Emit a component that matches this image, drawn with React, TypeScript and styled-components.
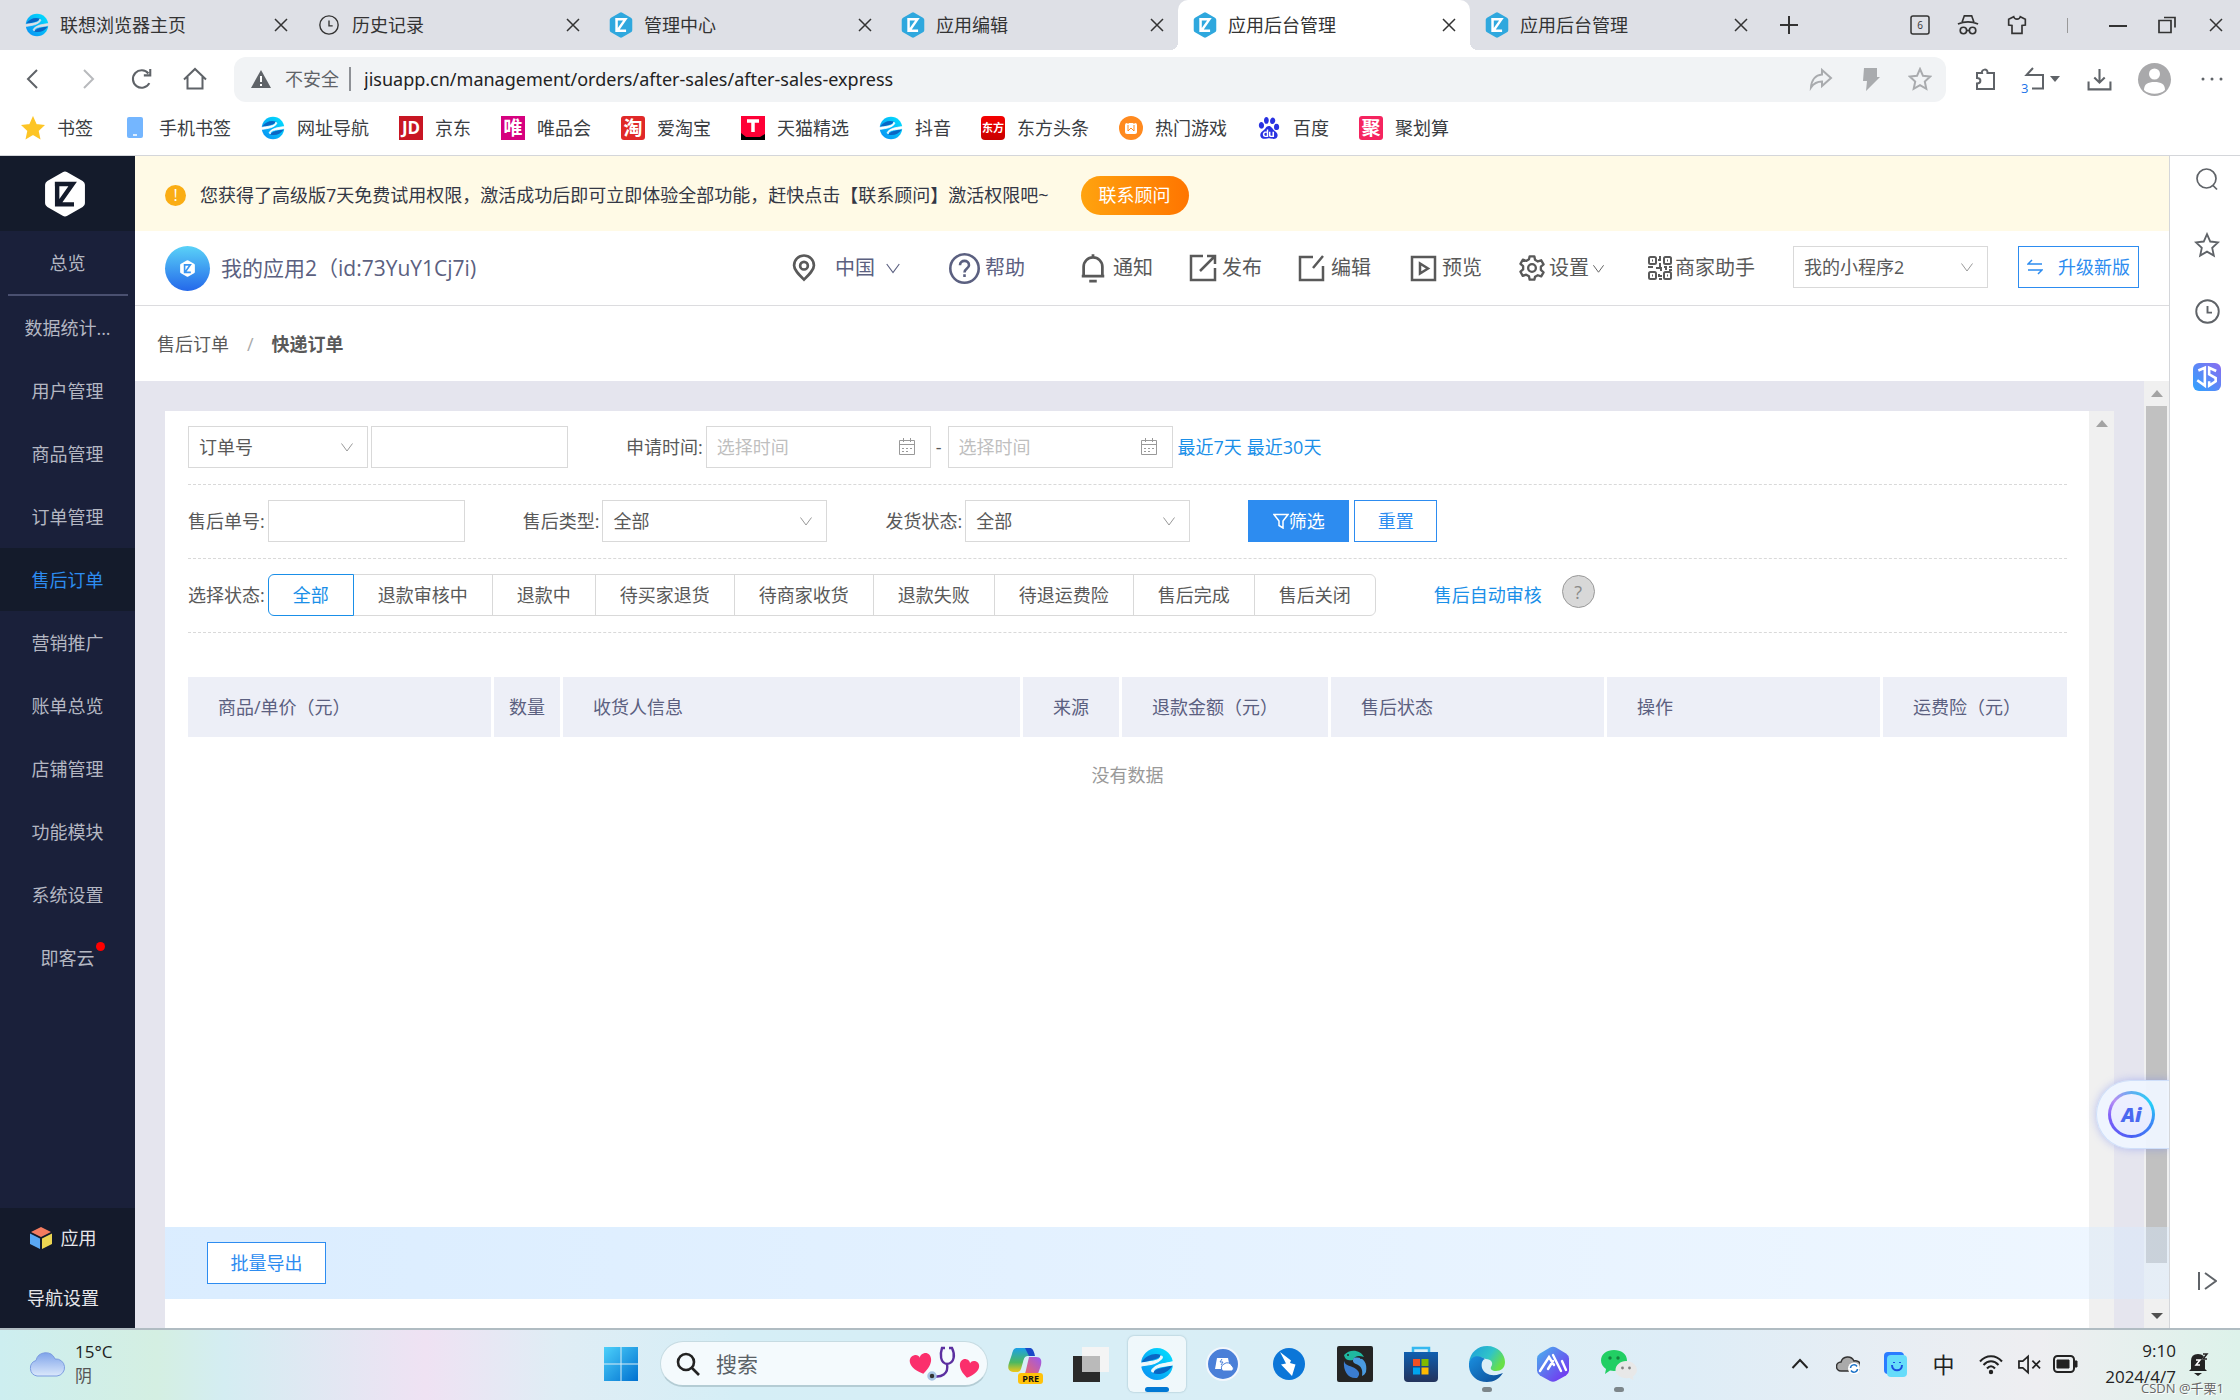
import React from "react";
import styled, { createGlobalStyle, css } from "styled-components";
import { SiBaidu } from "react-icons/si";

const ink = "#595959";
const slate = "#5b6080";
const blue = "#2d8cf0";
const line = "#d9d9d9";

const GlobalStyle = createGlobalStyle`
  * { box-sizing: border-box; }
  body {
    margin: 0;
    font-family: "Open Sans", "Noto Sans CJK SC", sans-serif;
    font-size: 18px;
    line-height: 24px;
    color: ${ink};
    background: #fff;
  }
  a { color: inherit; text-decoration: none; }
  button, input, select { font: inherit; color: inherit; margin: 0; border-radius: 0; }
  button { padding: 0; border: 0; background: none; cursor: pointer; }
  svg { display: block; flex: none; }
`;

const Screen = styled.div`
  display: flex;
  flex-direction: column;
  min-height: 100vh;
`;

/* ---------- icon helpers ---------- */

type IconProps = { size?: number; box?: number; stroke?: string; fill?: string; width?: number; d?: string; children?: React.ReactNode };
const Icon = ({ size = 24, box = 24, stroke = "currentColor", fill = "none", width = 2, d, children }: IconProps) => (
  <svg width={size} height={size} viewBox={`0 0 ${box} ${box}`} fill={fill} stroke={stroke} strokeWidth={width} aria-hidden="true">
    {d && <path d={d} />}
    {children}
  </svg>
);

const LenovoMark = ({ size = 24, id }: { size?: number; id: string }) => (
  <svg width={size} height={size} viewBox="0 0 32 32" aria-hidden="true">
    <defs>
      <linearGradient id={id} x1="0" y1="1" x2="1" y2="0">
        <stop offset="0" stopColor="#0a8cf2" />
        <stop offset="1" stopColor="#02e4ff" />
      </linearGradient>
      <mask id={`${id}Cut`}>
        <rect width="32" height="32" fill="#fff" />
        <path d="M-1 18.500C7 16.500 15 17 20.500 11c1-1.500.5-2.500-1-2.600C19 14 9 13.500-1 15.500z" fill="#000" stroke="#000" strokeWidth="1" />
        <path d="M33 13.500C25 15.500 17 15 11.500 21c-1 1.500-.5 2.500 1 2.600C13 18 23 18.500 33 16.500z" fill="#000" stroke="#000" strokeWidth="1" />
      </mask>
    </defs>
    <g mask={`url(#${id}Cut)`}>
      <circle cx="16" cy="16" r="15" fill={`url(#${id})`} />
      <path d="M2 13.500C6 8 13 5 20 7.500c-2 4-10 5-18 7z" fill="#0a66c4" />
      <path d="M30 18.500c-4 5.500-11 8.500-18 6 2-4 10-5 18-7z" fill="#0a66c4" />
    </g>
  </svg>
);

const JisuMark = ({ size = 26, hex = "#2fa8de", mark = "#fff" }: { size?: number; hex?: string; mark?: string }) => (
  <svg width={size} height={size} viewBox="0 0 24 24" aria-hidden="true">
    <path d="M10.800.600q1.200-.7 2.400 0l8 4.600q1.200.7 1.200 2v9.600q0 1.300-1.200 2l-8 4.600q-1.200.7-2.400 0l-8-4.600q-1.200-.7-1.200-2V7.200q0-1.300 1.200-2z" fill={hex} />
    <path d="M7.900 6.600v10.800h8.800M6.700 6.800h9.300L8.800 17" fill="none" stroke={mark} strokeWidth="2.300" />
  </svg>
);

const ClockIcon = ({ size = 24, width = 1.5 }: { size?: number; width?: number }) => (
  <Icon size={size} width={width}>
    <circle cx="12" cy="12" r="10" />
    <path d="M12 7v6h4" />
  </Icon>
);

const StarIcon = ({ size = 24, fill = "none", stroke = "currentColor", width = 1.7 }: { size?: number; fill?: string; stroke?: string; width?: number }) => (
  <Icon size={size} fill={fill} stroke={stroke} width={width} d="M12 2l3 6.800 7.200.8-5.400 5 1.500 7.200-6.300-3.700-6.300 3.700 1.500-7.200-5.400-5 7.200-.8z" />
);

const ChevronDown = ({ size = 14 }: { size?: number }) => <Icon size={size} box={14} width={1} d="M1.500 3.500L7 11l5.500-7.500" />;

/* ---------- browser chrome ---------- */

const TabStrip = styled.div`
  display: flex;
  height: 50px;
  padding-left: 10px;
  background: #dee0e6;
  color: #333;
`;

const Tab = styled.div<{ $active?: boolean }>`
  position: relative;
  display: flex;
  flex: 0 1 292px;
  align-items: center;
  gap: 12px;
  padding: 0 13px 0 16px;
  ${(p) =>
    p.$active &&
    css`
      background: #fff;
      border-radius: 10px 10px 0 0;
      &::before, &::after {
        content: "";
        position: absolute;
        bottom: 0;
        width: 8px;
        height: 8px;
      }
      &::before { left: -8px; background: radial-gradient(circle at 0 0, transparent 8px, #fff 8px); }
      &::after { right: -8px; background: radial-gradient(circle at 100% 0, transparent 8px, #fff 8px); }
    `}
`;

const TabTitle = styled.a`
  flex: 1;
  white-space: nowrap;
`;

const TabIcon = styled.span`
  display: flex;
  justify-content: center;
  width: 22px;
`;

const CellButton = styled.button<{ $w: number }>`
  display: flex;
  flex: none;
  align-items: center;
  justify-content: center;
  width: ${(p) => p.$w}px;
`;

const StripEnd = styled.div`
  display: flex;
  margin-left: auto;
`;

const StripRule = styled.span`
  align-self: center;
  width: 1px;
  height: 15px;
  margin: 0 25px;
  background: #999;
`;

const AddressRow = styled.div`
  display: flex;
  align-items: center;
  height: 58px;
  padding-left: 5px;
  color: #5f6368;
`;

const AddressBar = styled.label`
  display: flex;
  flex: 1;
  align-items: center;
  height: 45px;
  margin: 0 14px 0 12px;
  padding-left: 17px;
  border-radius: 12px;
  background: #f1f3f5;
`;

const SecurityNote = styled.span`
  display: flex;
  align-items: center;
  gap: 14px;
  padding-right: 10px;
  border-right: 2px solid #8e9196;
`;

const UrlInput = styled.input`
  flex: 1;
  padding: 0 0 0 13px;
  border: 0;
  outline: 0;
  background: none;
  color: #222;
  font-family: "Noto Sans", sans-serif;
`;

const Avatar = styled.span`
  display: flex;
  align-items: center;
  justify-content: center;
  width: 33px;
  height: 33px;
  border-radius: 50%;
  overflow: hidden;
  background: #a9a9ab;
`;

const UndoIcon = styled.span`
  position: relative;
  display: flex;
  align-items: center;
  gap: 6px;
  small {
    position: absolute;
    left: -3px;
    bottom: -4px;
    font-size: 13px;
    line-height: 14px;
    color: #1a73e8;
    background: #fff;
  }
`;

const Bookmarks = styled.nav`
  display: flex;
  align-items: center;
  gap: 30px;
  height: 48px;
  padding: 0 21px 8px;
  border-bottom: 1px solid #d4d6da;
  color: #3a3d42;
`;

const Bookmark = styled.a`
  display: flex;
  align-items: center;
  gap: 12px;
  white-space: nowrap;
`;

const Badge = styled.span<{ $bg: string; $size: number; $radius?: number }>`
  display: flex;
  align-items: center;
  justify-content: center;
  width: 24px;
  height: 24px;
  border-radius: ${(p) => p.$radius ?? 0}px;
  background: ${(p) => p.$bg};
  color: #fff;
  font-size: ${(p) => p.$size}px;
  font-weight: 700;
`;

/* ---------- page ---------- */

const Body = styled.div`
  display: flex;
  flex: 1;
`;

const SideNav = styled.nav`
  display: flex;
  flex-direction: column;
  flex: none;
  width: 135px;
  background: #1a203a;
  color: #b4b7c2;
`;

const SideLogo = styled.a`
  display: flex;
  align-items: center;
  justify-content: center;
  height: 75px;
  padding-right: 5px;
  background: #141b2b;
`;

const SideLink = styled.a<{ $active?: boolean }>`
  display: flex;
  align-items: center;
  justify-content: center;
  height: 63px;
  background: ${(p) => (p.$active ? "#141b2b" : "transparent")};
  color: ${(p) => (p.$active ? blue : "inherit")};
`;

const SideRule = styled.hr`
  width: 120px;
  height: 2px;
  margin: 0 auto;
  border: 0;
  background: #4a5070;
`;

const DotLabel = styled.span`
  position: relative;
  &::after {
    content: "";
    position: absolute;
    top: -4px;
    right: -10px;
    width: 9px;
    height: 9px;
    border-radius: 50%;
    background: #f00;
  }
`;

const SideBottom = styled.div`
  margin-top: auto;
  padding-right: 9px;
  background: #141a2b;
  color: #e6e6ea;
`;

const SideBottomLink = styled.a`
  display: flex;
  align-items: center;
  justify-content: center;
  gap: 9px;
  height: 60px;
`;

const Main = styled.main`
  display: flex;
  flex: 1;
  flex-direction: column;
  min-width: 0;
`;

const Notice = styled.div`
  display: flex;
  align-items: center;
  height: 75px;
  padding: 3px 0 0 30px;
  background: #fffae6;
  color: #333745;
`;

const NoticeMark = styled.span`
  width: 21px;
  height: 21px;
  margin-right: 14px;
  border-radius: 50%;
  background: #faad14;
  color: #fff;
  font-size: 16px;
  line-height: 21px;
  text-align: center;
`;

const AdvisorButton = styled.button`
  width: 108px;
  height: 39px;
  margin-left: 32px;
  border-radius: 20px;
  background: linear-gradient(90deg, #ffa30f, #ff7500);
  color: #fff;
`;

const Header = styled.header`
  display: flex;
  align-items: center;
  height: 75px;
  padding: 0 30px;
  border-bottom: 1px solid #dcdcdf;
  font-size: 20px;
`;

const AppBadge = styled.span`
  display: flex;
  flex-direction: column;
  align-items: center;
  justify-content: center;
  width: 45px;
  height: 45px;
  margin-right: 11px;
  border-radius: 50%;
  background: linear-gradient(#5ad2f8, #2468ea);
`;

const AppName = styled.h1`
  margin: 0 auto 0 0;
  color: ${slate};
  font-size: 21px;
  font-weight: 400;
`;

const HeaderLink = styled.a<{ $gap: number; $space?: number; $slate?: boolean }>`
  display: flex;
  align-items: center;
  gap: ${(p) => p.$space ?? 5}px;
  margin-left: ${(p) => p.$gap}px;
  color: ${(p) => (p.$slate ? slate : ink)};
  white-space: nowrap;
`;

const RegionName = styled.span`
  margin: 0 6px 0 13px;
`;

const SelectBox = styled.span<{ $w: number; $gap?: number }>`
  position: relative;
  display: inline-flex;
  width: ${(p) => p.$w}px;
  margin-left: ${(p) => p.$gap ?? 0}px;
  font-size: 18px;
  svg {
    position: absolute;
    top: 14px;
    right: 14px;
    color: #999;
    pointer-events: none;
  }
`;

const SelectInput = styled.select`
  appearance: none;
  width: 100%;
  height: 42px;
  padding: 0 10px;
  border: 1px solid ${line};
  background: #fff;
`;

const OutlineButton = styled.button<{ $w: number; $gap?: number }>`
  display: flex;
  align-items: center;
  justify-content: center;
  gap: 15px;
  width: ${(p) => p.$w}px;
  height: 42px;
  margin-left: ${(p) => p.$gap ?? 0}px;
  border: 1px solid ${blue};
  background: #fff;
  color: ${blue};
  font-size: 18px;
`;

const SolidButton = styled(OutlineButton)`
  gap: 0;
  background: ${blue};
  color: #fff;
`;

const HeaderActions = styled.div`
  display: flex;
  padding-bottom: 3px;
`;

const Crumbs = styled.nav`
  display: flex;
  align-items: center;
  gap: 18px;
  height: 75px;
  padding-left: 22px;
  span { color: #aaa; }
`;

const Workspace = styled.div`
  position: relative;
  display: flex;
  flex: 1;
  background: #e5e5ee;
`;

const Card = styled.section`
  display: flex;
  flex: 1;
  min-width: 0;
  margin: 30px 30px 0;
  background: #fff;
`;

const CardBody = styled.div`
  flex: 1;
  min-width: 0;
  padding: 0 22px 0 23px;
`;

const ScrollTrack = styled.div`
  display: flex;
  flex: none;
  flex-direction: column;
  align-items: center;
  width: 25px;
  background: #f0f0f0;
  color: #a3a3a3;
`;

const ScrollArrow = styled.span<{ $down?: boolean }>`
  height: 25px;
  padding-top: 9px;
  color: ${(p) => (p.$down ? "#505050" : "inherit")};
`;

const ScrollThumb = styled.span`
  flex: 857;
  width: 21px;
  background: #c1c1c1;
`;

const ScrollRest = styled.span`
  flex: 40;
`;

const FilterRow = styled.div`
  display: flex;
  align-items: center;
  height: 74px;
  padding-bottom: 2px;
  border-bottom: 1px dashed ${line};
  white-space: nowrap;
`;

const Field = styled.div<{ $gap?: number }>`
  display: flex;
  align-items: center;
  gap: 3px;
  margin-left: ${(p) => p.$gap ?? 0}px;
`;

const TextInput = styled.input`
  width: 197px;
  height: 42px;
  padding: 0 10px;
  border: 1px solid ${line};
  outline: 0;
`;

const DateBox = styled.span`
  display: flex;
  align-items: center;
  width: 225px;
  height: 42px;
  padding: 0 14px 0 10px;
  border: 1px solid ${line};
  color: #999;
`;

const DateInput = styled.input`
  flex: 1;
  min-width: 0;
  padding: 0;
  border: 0;
  outline: 0;
  background: none;
  &::placeholder { color: #bfbfbf; opacity: 1; }
`;

const Dash = styled.span`
  margin: 0 3px 0 2px;
`;

const QuickLink = styled.a<{ $gap?: number }>`
  margin-left: ${(p) => p.$gap ?? 2}px;
  color: #1a8fe8;
`;

const Segments = styled.div`
  display: flex;
`;

const Segment = styled.button<{ $active?: boolean }>`
  height: 42px;
  padding: 0 24px;
  margin-left: -1px;
  border: 1px solid ${line};
  background: #fff;
  &:first-child { margin-left: 0; border-radius: 6px 0 0 6px; }
  &:last-child { border-radius: 0 6px 6px 0; }
  ${(p) =>
    p.$active &&
    css`
      z-index: 1;
      border-color: #1a8fe8;
      color: #1a8fe8;
    `}
`;

const HelpButton = styled.button`
  width: 33px;
  height: 33px;
  margin: 0 0 6px 20px;
  border: 1px solid #999;
  border-radius: 50%;
  background: #d8d8d8;
  color: #8a8a8a;
`;

const Table = styled.table`
  width: 100%;
  margin-top: 44px;
  border-collapse: separate;
  border-spacing: 0;
  table-layout: fixed;
`;

const HeadCell = styled.th<{ $w?: number; $center?: boolean }>`
  width: ${(p) => (p.$w ? `${p.$w}px` : "auto")};
  height: 60px;
  padding: ${(p) => (p.$center ? "0" : "0 0 0 30px")};
  border-right: 3px solid #fff;
  background: #edeff7;
  color: ${slate};
  font-weight: 400;
  text-align: ${(p) => (p.$center ? "center" : "left")};
  white-space: nowrap;
  &:last-child { border-right: 0; }
`;

const EmptyCell = styled.td`
  height: 76px;
  padding: 0;
  color: #999;
  text-align: center;
`;

const ExportBar = styled.div`
  position: absolute;
  right: 0;
  bottom: 29px;
  left: 30px;
  display: flex;
  align-items: center;
  height: 72px;
  padding-left: 42px;
  background: linear-gradient(90deg, rgba(217, 236, 255, 0.96), rgba(214, 234, 255, 0.4));
`;

const AiButton = styled.button`
  position: absolute;
  right: 0;
  bottom: 179px;
  width: 73px;
  height: 69px;
  padding-left: 11px;
  border: 1px solid #cfdffa;
  border-right: 0;
  border-radius: 35px 0 0 35px;
  background: rgba(238, 245, 254, 0.97);
  box-shadow: 0 0 8px rgba(100, 120, 240, 0.4);
  clip-path: inset(-12px 0 -12px -12px);
`;

const AiRing = styled.span`
  display: flex;
  align-items: center;
  justify-content: center;
  width: 47px;
  height: 47px;
  border: 3px solid transparent;
  border-radius: 50%;
  background: linear-gradient(#eef0ff, #e6ebff) padding-box,
    conic-gradient(#62aef0, #22d0f8 60deg, #3b8cf6 110deg, #4a5ef4 180deg, #7a5cf8 260deg, #b890f4 310deg, #62aef0) border-box;
  color: #4a68f0;
  font-size: 20px;
  font-style: italic;
  font-weight: 800;
`;

const RightRail = styled.aside`
  display: flex;
  flex: none;
  flex-direction: column;
  align-items: center;
  width: 71px;
  padding: 10px 0 34px 4px;
  border-left: 1px solid #d4d6da;
  color: #5f6368;
`;

const RailButton = styled.button<{ $bottom?: boolean }>`
  display: flex;
  align-items: center;
  justify-content: center;
  width: 40px;
  height: 26px;
  margin: ${(p) => (p.$bottom ? "auto 0 0" : "0 0 40px")};
`;

const JsBadge = styled.span`
  display: flex;
  align-items: center;
  justify-content: center;
  width: 28px;
  height: 28px;
  border-radius: 6px;
  background: linear-gradient(45deg, #2ea4ff, #8a6cf0);
`;

/* ---------- taskbar ---------- */

const TaskBar = styled.footer`
  position: relative;
  display: grid;
  grid-template-columns: 1fr auto 1fr;
  align-items: center;
  height: 72px;
  padding-bottom: 2px;
  border-top: 2px solid #b0bcc2;
  background: linear-gradient(90deg, #cdeef0, #d4efe2 7%, #d4edf2 10%, #efe2f3 19%, #dfedf5 25%, #d5eef6 33%, #dbeef6 66%, #deedf7 75%, #eeeef1 91%, #ddf2ea);
  color: #222;
`;

const Weather = styled.a`
  display: flex;
  align-items: center;
  gap: 10px;
  padding-left: 29px;
  font-size: 17px;
  small { display: block; font-size: 17px; color: #555; }
`;

const Dock = styled.div`
  display: flex;
  align-items: center;
`;

const DockButton = styled.button<{ $active?: boolean; $mark?: string }>`
  position: relative;
  display: flex;
  align-items: center;
  justify-content: center;
  width: 58px;
  height: 56px;
  margin: 0 4px;
  border-radius: 6px;
  background: ${(p) => (p.$active ? "rgba(255,255,255,.6)" : "transparent")};
  box-shadow: ${(p) => (p.$active ? "0 0 2px rgba(0,60,80,.35)" : "none")};
  ${(p) =>
    p.$mark &&
    css`
      &::after {
        content: "";
        position: absolute;
        bottom: 0;
        width: ${p.$active ? 24 : 10}px;
        height: 5px;
        border-radius: 3px;
        background: ${p.$mark};
      }
    `}
`;

const SearchBox = styled.label`
  display: flex;
  align-items: center;
  width: 328px;
  height: 46px;
  margin: 0 4px 0 6px;
  padding: 0 6px 0 15px;
  border: 1px solid #c6dbe2;
  border-bottom: 2px solid #b4ccd4;
  border-radius: 23px;
  background: #f4fafd;
`;

const SearchInput = styled.input`
  flex: 1;
  min-width: 0;
  padding: 0 0 0 16px;
  border: 0;
  outline: 0;
  background: none;
  font-size: 21px;
  &::placeholder { color: #5a6166; opacity: 1; }
`;

const Tray = styled.div`
  display: flex;
  align-items: center;
  justify-content: flex-end;
  padding-right: 18px;
`;

const TrayButton = styled.button<{ $w: number }>`
  display: flex;
  align-items: center;
  justify-content: center;
  width: ${(p) => p.$w}px;
  font-size: 22px;
`;

const Clock = styled.time`
  width: 90px;
  font-size: 17px;
  line-height: 26px;
  text-align: right;
  white-space: nowrap;
`;

const Watermark = styled.span`
  position: absolute;
  right: 16px;
  bottom: 4px;
  font-size: 13px;
  line-height: 16px;
  color: #666;
  text-shadow: 1px 1px 0 #fff;
`;

const CopilotTag = styled.span`
  position: absolute;
  right: 11px;
  bottom: 8px;
  padding: 0 4px;
  border-radius: 3px;
  background: #ffc20a;
  color: #111;
  font-size: 9px;
  font-weight: 700;
  line-height: 11px;
`;

/* ---------- data ---------- */

const tabs = [
  { title: "联想浏览器主页", icon: <LenovoMark id="tabLenovo" /> },
  { title: "历史记录", icon: <ClockIcon size={22} /> },
  { title: "管理中心", icon: <JisuMark /> },
  { title: "应用编辑", icon: <JisuMark /> },
  { title: "应用后台管理", icon: <JisuMark />, active: true },
  { title: "应用后台管理", icon: <JisuMark /> },
];

const PhoneIcon = () => (
  <svg width="24" height="24" viewBox="0 0 24 24">
    <rect x="4" y="1" width="16" height="21" rx="2" fill="#74b6ff" />
    <path d="M10 19h4" stroke="#fff" strokeWidth="1.500" />
  </svg>
);

const GameIcon = () => (
  <svg width="24" height="24" viewBox="0 0 24 24">
    <circle cx="12" cy="12" r="12" fill="#ff8a1f" />
    <rect x="6" y="7" width="12" height="11" rx="2" fill="#fff" />
    <path d="M9 9v6l3-3 3 3V9M9 5v3M15 5v3" fill="none" stroke="#ff8a1f" strokeWidth="1" />
  </svg>
);

const TmallIcon = () => (
  <svg width="24" height="24" viewBox="0 0 24 24">
    <path d="M0 0h24v24H0z" fill="#ff0036" />
    <path d="M0 17l5 4h14l5-3v6H0z" fill="#000" />
    <path d="M6 5h12M12 5v11" stroke="#fff" strokeWidth="3.500" />
  </svg>
);

const bookmarks = [
  { label: "书签", icon: <StarIcon size={24} fill="#fdc526" stroke="#fdc526" /> },
  { label: "手机书签", icon: <PhoneIcon /> },
  { label: "网址导航", icon: <LenovoMark id="bmNav" /> },
  { label: "京东", icon: <Badge $bg="#c81623" $size={17}>JD</Badge> },
  { label: "唯品会", icon: <Badge $bg="#d6007f" $size={19}>唯</Badge> },
  { label: "爱淘宝", icon: <Badge $bg="#e02828" $size={19} $radius={3}>淘</Badge> },
  { label: "天猫精选", icon: <TmallIcon /> },
  { label: "抖音", icon: <LenovoMark id="bmDou" /> },
  { label: "东方头条", icon: <Badge $bg="linear-gradient(#f50000,#c80000)" $size={11} $radius={4}>东方</Badge> },
  { label: "热门游戏", icon: <GameIcon /> },
  { label: "百度", icon: <SiBaidu size={22} color="#2932e1" style={{ width: 24 }} /> },
  { label: "聚划算", icon: <Badge $bg="#f5245f" $size={19} $radius={3}>聚</Badge> },
];

const sideItems = ["数据统计...", "用户管理", "商品管理", "订单管理", "售后订单", "营销推广", "账单总览", "店铺管理", "功能模块", "系统设置"];

const statuses = ["全部", "退款审核中", "退款中", "待买家退货", "待商家收货", "退款失败", "待退运费险", "售后完成", "售后关闭"];

const columns: { title: string; w?: number; center?: boolean }[] = [
  { title: "商品/单价（元）", w: 306 },
  { title: "数量", w: 69, center: true },
  { title: "收货人信息" },
  { title: "来源", w: 99, center: true },
  { title: "退款金额（元）", w: 209 },
  { title: "售后状态", w: 276 },
  { title: "操作", w: 276 },
  { title: "运费险（元）", w: 184 },
];

/* ---------- pieces ---------- */

const CloseIcon = ({ size = 14, width = 1.5 }: { size?: number; width?: number }) => <Icon size={size} box={14} width={width} d="M1 1l12 12M13 1L1 13" />;

const CalendarIcon = () => (
  <Icon size={18} box={18} width={1}>
    <path d="M1.500 2.500h15v14h-15zM1.500 6.500h15M5.500 0v4M12.500 0v4" />
    <path d="M4 10.500h10M4 13.500h7" strokeDasharray="2 2" />
  </Icon>
);

const Triangle = ({ down }: { down?: boolean }) => (
  <svg width="12" height="8" viewBox="0 0 12 8" fill="currentColor">
    <path d={down ? "M0 1h12L6 7z" : "M0 7h12L6 0z"} />
  </svg>
);

const Dropdown = ({ id, value, w, gap, label }: { id: string; value: string; w: number; gap?: number; label?: string }) => (
  <SelectBox $w={w} $gap={gap}>
    <SelectInput id={id} aria-label={label} defaultValue={value}>
      <option>{value}</option>
    </SelectInput>
    <ChevronDown />
  </SelectBox>
);

const QrIcon = () => (
  <Icon size={26} box={26} width={2}>
    <rect x="2" y="2" width="7" height="7" rx="1.500" />
    <rect x="17" y="2" width="7" height="7" rx="1.500" />
    <rect x="2" y="17" width="7" height="7" rx="1.500" />
    <rect x="17" y="17" width="7" height="7" rx="1.500" />
    <path d="M5 5.500h1M20 5.500h1M5 20.500h1M20 20.500h1M13 1v4h-2M13 8v4M1 12h5M9 13h5v3M17 12h2v3M22 12h3M22 15h3M12 19v2h3M12 24h3" />
  </Icon>
);

const GearIcon = () => (
  <Icon size={28} width={2}>
    <circle cx="12" cy="12" r="3.300" />
    <path d="M10 2h4l.6 3 2.400 1.400 2.900-1 2 3.500-2.300 2v2.800l2.300 2-2 3.500-2.900-1-2.400 1.400L14 22h-4l-.6-2.900L7 17.700l-2.900 1-2-3.500 2.300-2v-2.800l-2.300-2 2-3.500 2.900 1 2.400-1.400z" strokeLinejoin="round" />
  </Icon>
);

const BrowserTop = () => (
  <header>
    <TabStrip>
      {tabs.map((t, i) => (
        <Tab key={i} $active={t.active}>
          <TabIcon>{t.icon}</TabIcon>
          <TabTitle href="#tab">{t.title}</TabTitle>
          <CellButton $w={16} aria-label="关闭标签页"><CloseIcon /></CellButton>
        </Tab>
      ))}
      <CellButton $w={54} aria-label="新建标签页"><Icon size={18} box={18} width={2} d="M9 0v18M0 9h18" /></CellButton>
      <StripEnd>
        <CellButton $w={48} aria-label="标签数量">
          <svg width="20" height="20" viewBox="0 0 20 20" fill="none" stroke="currentColor" strokeWidth="1.500">
            <rect x="1" y="1" width="18" height="18" rx="2" />
            <text x="10" y="14" textAnchor="middle" fontSize="10" fill="currentColor" stroke="none">6</text>
          </svg>
        </CellButton>
        <CellButton $w={48} aria-label="无痕浏览">
          <Icon size={22} width={1.8}>
            <path d="M1 11c7-3 15-3 22 0M5.500 9L8 2h8l2.500 7" />
            <circle cx="7" cy="18" r="3.500" /><circle cx="17" cy="18" r="3.500" /><path d="M10.500 18h3" />
          </Icon>
        </CellButton>
        <CellButton $w={50} aria-label="皮肤"><Icon size={20} width={2} d="M8 2c1 4 7 4 8 0l6 3v7l-4 .5V22H6v-9.500L2 12V5z" /></CellButton>
        <StripRule />
        <CellButton $w={49} aria-label="最小化"><Icon size={18} box={18} width={2} d="M0 10h18" /></CellButton>
        <CellButton $w={49} aria-label="还原"><Icon size={18} box={18} width={1.7} d="M1 4.500h12v12H1zM6 1.500h11v10" /></CellButton>
        <CellButton $w={49} aria-label="关闭"><CloseIcon /></CellButton>
      </StripEnd>
    </TabStrip>
    <AddressRow>
      <CellButton $w={55} aria-label="后退"><Icon size={20} box={20} width={2} d="M14 1L5 10l9 9" /></CellButton>
      <CellButton $w={56} aria-label="前进"><Icon size={20} box={20} width={2} stroke="#b8babd" d="M6 1l9 9-9 9" /></CellButton>
      <CellButton $w={52} aria-label="刷新"><Icon size={22} width={2.3} d="M20 16.500A9.500 9.500 0 1 1 19 6M21 1v7h-7" /></CellButton>
      <CellButton $w={54} aria-label="主页"><Icon size={24} width={2} d="M1 12.500L12 2l11 10.500M4.500 10v11.500h15V10" /></CellButton>
      <AddressBar>
        <SecurityNote>
          <svg width="20" height="18" viewBox="0 0 20 18"><path d="M10 0l10 18H0z" fill="#5f6368" /><path d="M10 6v6M10 14v2" stroke="#fff" strokeWidth="2" /></svg>
          不安全
        </SecurityNote>
        <UrlInput aria-label="地址栏" defaultValue="jisuapp.cn/management/orders/after-sales/after-sales-express" />
        <CellButton $w={48} aria-label="分享"><Icon size={24} stroke="#a9abae" width={2} d="M13 3l9 8-9 8v-4.500c-5 0-8 1.500-11 6C2.500 13 6.500 8 13 7.500z" /></CellButton>
        <CellButton $w={49} aria-label="极速模式"><Icon size={24} stroke="none" fill="#a9abae" d="M6 1h13v9h3L8 24l1-10H5z" /></CellButton>
        <CellButton $w={52} aria-label="收藏"><StarIcon size={24} stroke="#a9abae" width={2} /></CellButton>
      </AddressBar>
      <CellButton $w={50} aria-label="扩展"><Icon size={24} width={2} d="M4 6h5c-1-4 6-5 5.500 0H21v16H4v-5.500c4.500 0 4.500-5.500 0-5.500z" /></CellButton>
      <CellButton $w={64} aria-label="恢复标签页">
        <UndoIcon>
          <svg width="20" height="24" viewBox="0 0 20 24" fill="none" stroke="currentColor" strokeWidth="2"><path d="M9 1L2.500 8H19v13.500H8" /></svg>
          <small>3</small>
          <svg width="10" height="6" viewBox="0 0 10 6" fill="currentColor"><path d="M0 0h10L5 6z" /></svg>
        </UndoIcon>
      </CellButton>
      <CellButton $w={50} aria-label="下载"><Icon size={25} width={2} d="M12 2v13M7 10l5 5 5-5M1.500 14v7.500h21V14" /></CellButton>
      <CellButton $w={60} aria-label="账户">
        <Avatar><svg width="33" height="33" viewBox="0 0 33 33" fill="#fff"><circle cx="16.500" cy="11" r="5.500" /><path d="M6 27c0-6 4-8 10.500-8S27 21 27 27c-5 5-16 5-21 0z" /></svg></Avatar>
      </CellButton>
      <CellButton $w={56} aria-label="更多"><Icon size={24} stroke="none" fill="currentColor"><circle cx="3" cy="12" r="1.500" /><circle cx="12" cy="12" r="1.500" /><circle cx="21" cy="12" r="1.500" /></Icon></CellButton>
    </AddressRow>
    <Bookmarks>
      {bookmarks.map((b) => (
        <Bookmark key={b.label} href="#bookmark">{b.icon}{b.label}</Bookmark>
      ))}
    </Bookmarks>
  </header>
);

const Sidebar = () => (
  <SideNav>
    <SideLogo href="#home" aria-label="首页"><JisuMark size={46} hex="#fff" mark="#141b2b" /></SideLogo>
    <SideLink href="#overview">总览</SideLink>
    <SideRule />
    {sideItems.map((t) => (
      <SideLink key={t} href="#section" $active={t === "售后订单"}>{t}</SideLink>
    ))}
    <SideLink href="#cloud"><DotLabel>即客云</DotLabel></SideLink>
    <SideBottom>
      <SideBottomLink href="#apps">
        <svg width="22" height="22" viewBox="0 0 22 22">
          <path d="M11 0l10 5-10 5L1 5z" fill="#f47b5f" />
          <path d="M0 6.500l10 5V22L0 17z" fill="#5aa8f4" />
          <path d="M22 6.500l-10 5V22l10-5z" fill="#ecd552" />
        </svg>
        应用
      </SideBottomLink>
      <SideBottomLink href="#nav">导航设置</SideBottomLink>
    </SideBottom>
  </SideNav>
);

const PageHeader = () => (
  <Header>
    <AppBadge><JisuMark size={17} hex="#fff" mark="#3a96f2" /></AppBadge>
    <AppName>我的应用2（id:73YuY1Cj7i)</AppName>
    <HeaderLink href="#region" $gap={0} $slate $space={4}>
      <Icon size={28} stroke={ink} width={2.3}><path d="M12 22C7 17 3.500 13.500 3.500 9.800a8.500 8.500 0 0 1 17 0C20.500 13.500 17 17 12 22z" /><circle cx="12" cy="10" r="3.300" /></Icon>
      <RegionName>中国</RegionName>
      <ChevronDown size={16} />
    </HeaderLink>
    <HeaderLink href="#help" $gap={48} $slate>
      <Icon size={31} width={2}><circle cx="12" cy="12" r="11" /><path d="M8.500 9.500c0-4.500 7-4.500 7 0 0 2.500-3.500 2.500-3.500 5.500M12 16.500v2" /></Icon>帮助
    </HeaderLink>
    <HeaderLink href="#notice" $gap={53}>
      <Icon size={30} width={2.200}><path d="M3 18.500h18M4.500 18.500V11a7.500 7.500 0 0 1 15 0v7.500M12 3.500V1M9 22.500h6" /></Icon>通知
    </HeaderLink>
    <HeaderLink href="#publish" $gap={36}>
      <Icon size={28} box={28} width={2.500} d="M14 2H2v24h24V14M18 2h8v8M26 2L11 17" />发布
    </HeaderLink>
    <HeaderLink href="#edit" $gap={36}>
      <Icon size={28} box={28} width={2.500} d="M15 3H2v23h23V12M25 2L15 14" />编辑
    </HeaderLink>
    <HeaderLink href="#preview" $gap={39}>
      <Icon size={27} box={27} width={2.500} d="M2 2h23v23H2zM10 8.500v10l8-5z" />预览
    </HeaderLink>
    <HeaderLink href="#settings" $gap={36} $space={3}>
      <GearIcon />设置<ChevronDown size={13} />
    </HeaderLink>
    <HeaderLink href="#assistant" $gap={42} $space={2}>
      <QrIcon />商家助手
    </HeaderLink>
    <HeaderActions>
      <Dropdown id="miniapp" label="小程序" value="我的小程序2" w={195} gap={38} />
      <OutlineButton $w={121} $gap={30}>
        <Icon size={16} box={16} width={1.500} d="M15 5H1l4-4M1 11h14l-4 4" />升级新版
      </OutlineButton>
    </HeaderActions>
  </Header>
);

const Filters = () => (
  <form onSubmit={(e) => e.preventDefault()}>
    <FilterRow>
      <Field>
        <Dropdown id="keyType" label="查询类型" value="订单号" w={180} />
        <TextInput aria-label="查询内容" />
      </Field>
      <Field $gap={58}>
        <label htmlFor="from">申请时间:</label>
        <DateBox><DateInput id="from" placeholder="选择时间" /><CalendarIcon /></DateBox>
        <Dash>-</Dash>
        <DateBox><DateInput aria-label="结束时间" placeholder="选择时间" /><CalendarIcon /></DateBox>
        <QuickLink href="#7">最近7天</QuickLink>
        <QuickLink href="#30">最近30天</QuickLink>
      </Field>
    </FilterRow>
    <FilterRow>
      <Field>
        <label htmlFor="serviceNo">售后单号:</label>
        <TextInput id="serviceNo" />
      </Field>
      <Field $gap={58}>
        <label htmlFor="serviceType">售后类型:</label>
        <Dropdown id="serviceType" value="全部" w={225} />
      </Field>
      <Field $gap={58}>
        <label htmlFor="shipState">发货状态:</label>
        <Dropdown id="shipState" value="全部" w={225} />
      </Field>
      <Field $gap={58}>
        <SolidButton $w={101}><Icon size={16} box={16} width={1.500} d="M1 1.500h14L10 8v7l-4-2.500V8z" />筛选</SolidButton>
        <OutlineButton type="reset" $w={83} $gap={2}>重置</OutlineButton>
      </Field>
    </FilterRow>
    <FilterRow>
      <Field>
        <span>选择状态:</span>
        <Segments>
          {statuses.map((s, i) => (
            <Segment type="button" key={s} $active={i === 0}>{s}</Segment>
          ))}
        </Segments>
      </Field>
      <QuickLink href="#auto" $gap={58}>售后自动审核</QuickLink>
      <HelpButton type="button" aria-label="帮助">?</HelpButton>
    </FilterRow>
  </form>
);

const Orders = () => (
  <Table>
    <thead>
      <tr>
        {columns.map((c) => (
          <HeadCell key={c.title} $w={c.w} $center={c.center}>{c.title}</HeadCell>
        ))}
      </tr>
    </thead>
    <tbody>
      <tr><EmptyCell colSpan={columns.length}>没有数据</EmptyCell></tr>
    </tbody>
  </Table>
);

const Rail = () => (
  <RightRail>
    <RailButton aria-label="搜索"><Icon size={24} width={1.700}><circle cx="11.500" cy="11.500" r="9.500" /><path d="M18 18.500l4 4" /></Icon></RailButton>
    <RailButton aria-label="收藏"><StarIcon size={26} /></RailButton>
    <RailButton aria-label="历史"><ClockIcon size={27} width={1.700} /></RailButton>
    <RailButton aria-label="插件">
      <JsBadge>
        <svg width="26" height="26" viewBox="0 0 24 24" fill="none" stroke="#fff" strokeWidth="2.400">
          <path d="M4 6l6-2.500V20l-7-5M20.500 6.500L14 3.500v6l6 3.500v3l-6 4v-4" />
        </svg>
      </JsBadge>
    </RailButton>
    <RailButton $bottom aria-label="收起"><Icon size={20} box={20} width={2} d="M2 1v18M8 2l11 8-11 8" /></RailButton>
  </RightRail>
);

const Heart = ({ x, y, s, r }: { x: number; y: number; s: number; r: number }) => (
  <path transform={`translate(${x} ${y}) rotate(${r}) scale(${s})`} d="M0 11C-15 2-12-9-5-9-2-9 0-7 0-5 0-7 2-9 5-9 12-9 15 2 0 11z" fill="#fb2f6c" />
);

const Tasks = () => (
  <TaskBar>
    <Weather href="#weather">
      <svg width="36" height="26" viewBox="0 0 36 26">
        <defs><linearGradient id="cloud" x1="0" y1="0" x2="0" y2="1"><stop offset="0" stopColor="#7fa4ea" /><stop offset="1" stopColor="#dbe8fb" /></linearGradient></defs>
        <path d="M8 25a8 8 0 0 1-1-15.500A10 10 0 0 1 26 8a8.500 8.500 0 0 1 2 17z" fill="url(#cloud)" stroke="#7c9ce0" strokeWidth="1" />
      </svg>
      <span>15°C<small>阴</small></span>
    </Weather>
    <Dock>
      <DockButton aria-label="开始">
        <svg width="36" height="36" viewBox="0 0 36 36">
          <defs><linearGradient id="win" x1="0" y1="0" x2="1" y2="1"><stop offset="0" stopColor="#4cd0fa" /><stop offset="1" stopColor="#0070d0" /></linearGradient></defs>
          <path d="M1 1h16.500v16.500H1zM18.500 1H35v16.500H18.500zM1 18.500h16.500V35H1zM18.500 18.500H35V35H18.500z" fill="url(#win)" />
        </svg>
      </DockButton>
      <SearchBox>
        <Icon size={24} width={2.600}><circle cx="10" cy="10" r="8" /><path d="M16 16l7 7" /></Icon>
        <SearchInput type="text" aria-label="搜索" placeholder="搜索" />
        <svg width="72" height="36" viewBox="0 0 72 36" fill="none">
          <Heart x={12} y={17} s={1} r={-12} />
          <Heart x={60} y={22} s={0.9} r={12} />
          <path d="M36 2h-3c-2 6-2 15 5 16 8-1 8-10 5-16h-3M38 18c2 10-6 14-14 12" stroke="#5b2fa0" strokeWidth="2.400" />
          <circle cx="23" cy="30" r="3.500" fill="#333" stroke="#a8c4e4" strokeWidth="2.500" />
        </svg>
      </SearchBox>
      <DockButton aria-label="Copilot">
        <svg width="36" height="36" viewBox="0 0 36 36">
          <defs>
            <linearGradient id="cpA" x1="0" y1="0" x2="0" y2="1"><stop offset="0" stopColor="#1ba0e8" /><stop offset=".6" stopColor="#4cb860" /><stop offset="1" stopColor="#f0c818" /></linearGradient>
            <linearGradient id="cpB" x1="1" y1="0" x2="0" y2="1"><stop offset="0" stopColor="#9a58f0" /><stop offset="1" stopColor="#fa6a50" /></linearGradient>
          </defs>
          <path d="M10 2h12c3 0 4 3 5 8h-6c-3 0-4 2-5 6l-2 7c-1 3-3 3-6 3-6 0-8-3-6-9l3-9c1-4 2-6 5-6z" fill="url(#cpA)" />
          <path d="M18 2h5c3 0 4 4 5 8h-6z" fill="#1a48c8" />
          <path d="M22 11h7c5 0 6 3 5 8l-2 6c-1 3-2 5-5 5H14c3 0 4-2 5-6z" fill="url(#cpB)" />
        </svg>
        <CopilotTag>PRE</CopilotTag>
      </DockButton>
      <DockButton aria-label="任务视图">
        <svg width="36" height="36" viewBox="0 0 36 36">
          <path d="M0 10h27v26H0z" fill="#2a2a2a" />
          <path d="M9 1h27v25H9z" fill="#f4f4f4" />
          <path d="M9 10h18v16H9z" fill="#bababa" />
        </svg>
      </DockButton>
      <DockButton $active $mark="#0078d4" aria-label="联想浏览器"><LenovoMark size={34} id="dockLenovo" /></DockButton>
      <DockButton aria-label="网盘">
        <svg width="36" height="36" viewBox="0 0 36 36">
          <circle cx="18" cy="18" r="16" fill="#4a7fd8" stroke="#f2f7fd" strokeWidth="2" />
          <path d="M12 12h11l1 5-4 6H10z" fill="#fff" /><path d="M18 25a4 4 0 0 1 1-7 5 5 0 0 1 8 2 3 3 0 0 1 0 5z" fill="#fff" stroke="#4a7fd8" strokeWidth="1" />
          <path d="M17 13l-2 3h3l-2 3" stroke="#4a7fd8" fill="none" />
        </svg>
      </DockButton>
      <DockButton aria-label="迅雷">
        <svg width="34" height="34" viewBox="0 0 34 34"><circle cx="17" cy="17" r="16" fill="#0b76d8" /><path d="M8 5l11 8.500-1 2.500 5.500 1.500L20 29 9 17.500l5-1z" fill="#fff" /></svg>
      </DockButton>
      <DockButton aria-label="素材库">
        <svg width="36" height="36" viewBox="0 0 36 36">
          <rect width="36" height="36" rx="2" fill="#242424" />
          <path d="M7 9c6-7 17-5 20 2-6-2-9-1-11 3-4 1-8 0-9-5z" fill="#1fb8a0" />
          <path d="M17 12c8-2 14 4 12 14-1 2-2 3-4 4 1-7-1-10-6-12-3-1-4-4-2-6z" fill="#4a9ae0" />
          <path d="M7 15c2 6 7 4 12 8 4 3 4 6 1 9C11 33 6 25 7 15z" fill="#3a7cd0" />
          <circle cx="11" cy="9" r="1" fill="#242424" /><circle cx="24" cy="12" r="1" fill="#242424" />
        </svg>
      </DockButton>
      <DockButton aria-label="应用商店">
        <svg width="36" height="36" viewBox="0 0 36 36">
          <defs><linearGradient id="store" x1="0" y1="0" x2="0" y2="1"><stop offset="0" stopColor="#0f5fb0" /><stop offset="1" stopColor="#23335c" /></linearGradient></defs>
          <path d="M10 8V2h16v6" fill="none" stroke="#35b8f0" strokeWidth="2.500" />
          <path d="M1 6h34v26q0 4-4 4H5q-4 0-4-4z" fill="url(#store)" />
          <path d="M10 13h7v7h-7z" fill="#f25022" /><path d="M18.500 13h7v7h-7z" fill="#7fba00" />
          <path d="M10 21.500h7v7h-7z" fill="#00a4ef" /><path d="M18.500 21.500h7v7h-7z" fill="#ffb900" />
        </svg>
      </DockButton>
      <DockButton $mark="#7d868a" aria-label="Edge">
        <svg width="36" height="36" viewBox="0 0 36 36">
          <defs>
            <linearGradient id="edA" x1="0" y1="0" x2="1" y2=".5"><stop offset="0" stopColor="#1c9cdc" /><stop offset=".6" stopColor="#30c4c8" /><stop offset="1" stopColor="#68e048" /></linearGradient>
            <linearGradient id="edB" x1="0" y1="0" x2="1" y2="1"><stop offset="0" stopColor="#1a90e0" /><stop offset="1" stopColor="#0c4a94" /></linearGradient>
          </defs>
          <path d="M0 17C1 6 9 0 18 0c11 0 18 8 18 16 0 6-4 9-9 9-4 0-6-2-5-4 3-4 0-8-5-8C9 9 3 11 0 17z" fill="url(#edA)" />
          <path d="M0 17c2-7 9-9 16-4-3 1-4 5-3 9 2 6 10 9 18 6l3-1c-4 6-9 9-16 9C7 36-1 28 0 17z" fill="url(#edB)" />
        </svg>
      </DockButton>
      <DockButton aria-label="AI 助手">
        <svg width="34" height="36" viewBox="0 0 34 36">
          <defs><linearGradient id="hexa" x1="0" y1="0" x2="1" y2="1"><stop offset="0" stopColor="#48b4ee" /><stop offset="1" stopColor="#7828f0" /></linearGradient></defs>
          <path d="M14 1.500q3-1.500 6 0l10 6q3 2 3 5v12q0 3-3 5l-10 5.500q-3 1.500-6 0L4 29.500q-3-2-3-5v-12q0-3 3-5z" fill="url(#hexa)" />
          <path d="M4 25l9-14 5 8M12 23l5-8M17 9l8 16M26 15l4 9" stroke="#fff" strokeWidth="2.400" fill="none" strokeLinecap="round" />
        </svg>
      </DockButton>
      <DockButton $mark="#7d868a" aria-label="微信">
        <svg width="36" height="34" viewBox="0 0 36 34">
          <path d="M13 3c7 0 13 4 13 10.500S20 24 13 24l-4-.5L4 27l1-5C2 20 0 17 0 13.500 0 7 6 3 13 3z" fill="#22cf64" />
          <circle cx="9" cy="11" r="1.700" fill="#14803c" /><circle cx="17" cy="11" r="1.700" fill="#14803c" />
          <path d="M25 14c6 0 11 4 11 9 0 3-2 5-4 6.500l.5 3.500-4-2c-8 1-14-3-14-8s5-9 10.500-9z" fill="#e8e8e8" />
          <circle cx="21.500" cy="21" r="1.400" fill="#808080" /><circle cx="28.500" cy="21" r="1.400" fill="#808080" />
        </svg>
      </DockButton>
    </Dock>
    <Tray>
      <TrayButton $w={48} aria-label="显示隐藏的图标"><Icon size={18} box={18} width={2} d="M1.500 13L9 5l7.500 8" /></TrayButton>
      <TrayButton $w={48} aria-label="云同步">
        <svg width="24" height="20" viewBox="0 0 24 20"><path d="M5 17a4.500 4.500 0 0 1 0-9 7 7 0 0 1 13-1 5 5 0 0 1 3 10z" fill="#aaa" stroke="#333" strokeWidth="1.500" /><circle cx="18" cy="14.500" r="6" fill="#fff" /><path d="M14.500 14a3.500 3.500 0 0 1 6.500-1.500M21.500 15a3.500 3.500 0 0 1-6.500 1.500" fill="none" stroke="#1a72c8" strokeWidth="1.500" /></svg>
      </TrayButton>
      <TrayButton $w={47} aria-label="电脑管家">
        <svg width="23" height="25" viewBox="0 0 23 25"><rect width="20" height="22" rx="4" fill="#2a7cff" /><rect x="3" y="3" width="20" height="22" rx="4" fill="#66dcfa" /><path d="M8 13c0 7 10 7 10 0M10 10v1M16 10v1" fill="none" stroke="#1a50e0" strokeWidth="2" /></svg>
      </TrayButton>
      <TrayButton $w={49} aria-label="输入法">中</TrayButton>
      <TrayButton $w={46} aria-label="网络">
        <Icon size={24} width={2}><path d="M1 9.500c6-7 16-7 22 0M4.500 13c4.500-5 10.500-5 15 0M8 16.500c2.500-3 5.500-3 8 0" /><circle cx="12" cy="20" r="1.200" fill="currentColor" /></Icon>
      </TrayButton>
      <TrayButton $w={30} aria-label="音量"><Icon size={23} width={1.800} d="M1 8.500h4l5.500-5v17l-5.500-5H1zM15 8l8 8M23 8l-8 8" /></TrayButton>
      <TrayButton $w={42} aria-label="电池">
        <svg width="25" height="18" viewBox="0 0 25 18"><rect x="1" y="1" width="20" height="16" rx="3.500" fill="none" stroke="#222" strokeWidth="2" /><path d="M4 5h12v8H4zM22 6h2v6h-2z" fill="#222" stroke="#222" /></svg>
      </TrayButton>
      <Clock>9:10<br />2024/4/7</Clock>
      <TrayButton $w={46} aria-label="通知">
        <svg width="22" height="24" viewBox="0 0 22 24"><path d="M3 17V9q0-7 7-7t7 7v8l2 2H1zM6 21h8l-4 3z" fill="#222" /><path d="M8 8h4l-4 5h4M15 2h4l-4 5h4" fill="none" stroke="#fff" strokeWidth="1.500" /><path d="M15 2h4l-4 5h4" fill="none" stroke="#222" strokeWidth="1.500" /></svg>
      </TrayButton>
    </Tray>
    <Watermark>CSDN @千栗1</Watermark>
  </TaskBar>
);

export default function App() {
  return (
    <Screen>
      <GlobalStyle />
      <BrowserTop />
      <Body>
        <Sidebar />
        <Main>
          <Notice>
            <NoticeMark>!</NoticeMark>
            您获得了高级版7天免费试用权限，激活成功后即可立即体验全部功能，赶快点击【联系顾问】激活权限吧~
            <AdvisorButton>联系顾问</AdvisorButton>
          </Notice>
          <PageHeader />
          <Crumbs><a href="#after">售后订单</a><span>/</span><strong>快递订单</strong></Crumbs>
          <Workspace>
            <Card>
              <CardBody>
                <Filters />
                <Orders />
              </CardBody>
              <ScrollTrack><ScrollArrow><Triangle /></ScrollArrow></ScrollTrack>
            </Card>
            <ScrollTrack>
              <ScrollArrow><Triangle /></ScrollArrow>
              <ScrollThumb />
              <ScrollRest />
              <ScrollArrow $down><Triangle down /></ScrollArrow>
            </ScrollTrack>
            <ExportBar><OutlineButton $w={119}>批量导出</OutlineButton></ExportBar>
            <AiButton aria-label="AI 助手"><AiRing>Ai</AiRing></AiButton>
          </Workspace>
        </Main>
        <Rail />
      </Body>
      <Tasks />
    </Screen>
  );
}
